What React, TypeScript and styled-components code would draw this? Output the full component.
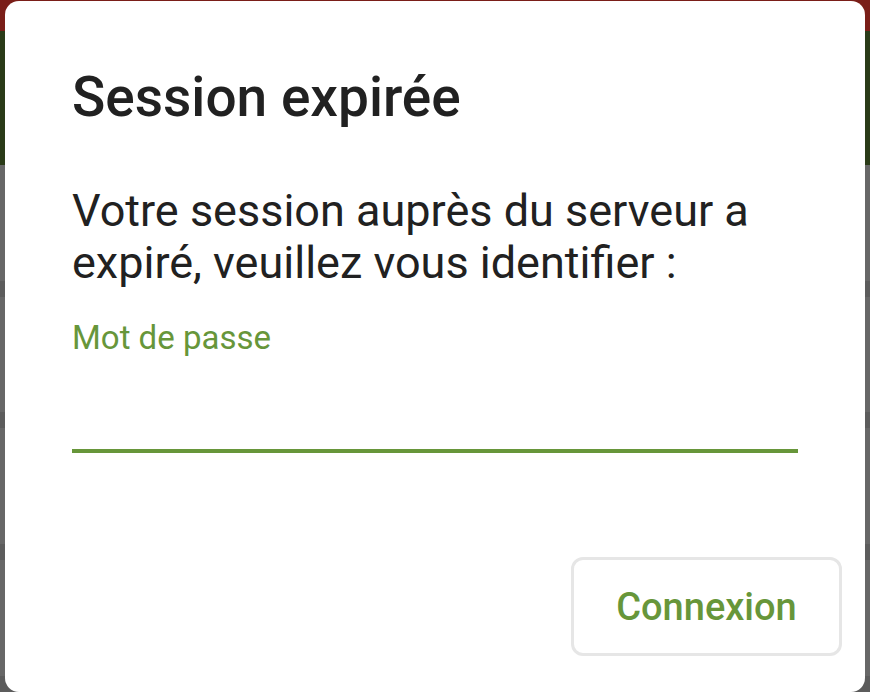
import React from "react";
import styled, { createGlobalStyle } from "styled-components";

const GlobalStyle = createGlobalStyle`
	html, body {
		margin: 0;
		padding: 0;
		height: 100%;
		overflow: hidden;
		font-family: Roboto, "Noto Sans", sans-serif;
	}
	#root {
		height: 100%;
	}
`;

const Screen = styled.div`
	position: relative;
	height: 692px;
	background: #676767;
	display: flex;
	flex-direction: column;
`;

const StatusBar = styled.div`
	height: 32px;
	background: #7a1e18;
`;

const Toolbar = styled.div`
	height: 136px;
	background: #2a3b18;
`;

const ListRow = styled.div`
	height: 118px;
	border-bottom: 16px solid #5c5c5c;
	background: #676767;
`;

const Dialog = styled.div`
	position: absolute;
	top: 1px;
	left: 5px;
	right: 5px;
	height: 691px;
	background: #ffffff;
	border-radius: 14px;
	box-sizing: border-box;
	padding: 64px 67px 0;
	display: flex;
	flex-direction: column;
`;

const Title = styled.h1`
	margin: 0;
	font-size: 55px;
	line-height: 64px;
	font-weight: 500;
	color: #212121;
`;

const Message = styled.p`
	margin: 56px 0 0;
	font-size: 45px;
	line-height: 52px;
	font-weight: 400;
	color: #212121;
`;

const Field = styled.label`
	display: flex;
	flex-direction: column;
	margin-top: 31px;
`;

const FieldLabel = styled.span`
	font-size: 33px;
	line-height: 36px;
	color: #67963a;
`;

const Input = styled.input`
	height: 93px;
	border: none;
	border-bottom: 4px solid #67963a;
	outline: none;
	background: transparent;
	font-family: inherit;
	font-size: 38px;
	padding: 0;
`;

const Actions = styled.div`
	margin-top: auto;
	margin-right: -44px;
	margin-bottom: 36px;
	display: flex;
	justify-content: flex-end;
`;

const Button = styled.button`
	width: 271px;
	height: 99px;
	border: 3px solid #e6e6e6;
	border-radius: 12px;
	background: #ffffff;
	font-family: inherit;
	font-size: 38px;
	font-weight: 500;
	color: #67963a;
	cursor: pointer;
`;

export default function App() {
	return (
		<>
			<GlobalStyle />
			<Screen>
				<StatusBar />
				<Toolbar />
				<ListRow />
				<ListRow />
				<ListRow />
				<ListRow />
				<Dialog>
					<Title>Session expirée</Title>
					<Message>
						Votre session auprès du serveur a expiré, veuillez vous identifier :
					</Message>
					<Field>
						<FieldLabel>Mot de passe</FieldLabel>
						<Input type="password" />
					</Field>
					<Actions>
						<Button>Connexion</Button>
					</Actions>
				</Dialog>
			</Screen>
		</>
	);
}
